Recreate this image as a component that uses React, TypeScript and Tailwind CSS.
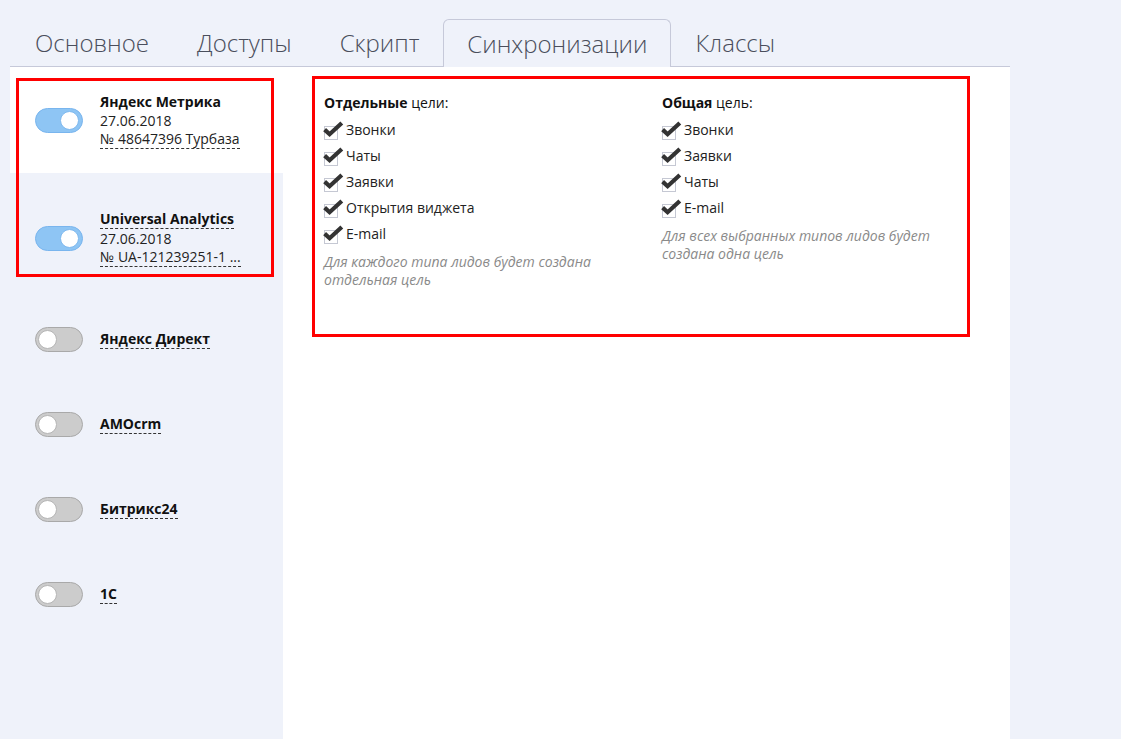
import React from "react";

function Toggle({ on }: { on: boolean }) {
  return on ? (
    <div className="relative h-[25px] w-[48px] shrink-0 rounded-full border border-[#79b5ee] bg-[#8ec5f4]">
      <div className="absolute right-[3px] top-[2px] h-[19px] w-[19px] rounded-full border border-[#7fb9ef] bg-white" />
    </div>
  ) : (
    <div className="relative h-[25px] w-[48px] shrink-0 rounded-full border border-[#a9a9a9] bg-[#cccccc]">
      <div className="absolute left-[2px] top-[2px] h-[19px] w-[19px] rounded-full border border-[#b5b5b5] bg-white" />
    </div>
  );
}

function Check({ label }: { label: string }) {
  return (
    <div className="flex h-[26px] items-center">
      <svg width="21" height="20" viewBox="0 0 21 20" className="shrink-0 -ml-px">
        <rect x="1.5" y="6.5" width="13" height="13" fill="#ffffff" stroke="#c5c8d3" />
        <path d="M1.6 9.6 L6.6 14.2 L18.8 3" fill="none" stroke="#333333" strokeWidth="4.2" strokeLinejoin="miter" />
      </svg>
      <span className="ml-[2px] text-[14px] leading-[18px] text-[#222]">{label}</span>
    </div>
  );
}

export default function App() {
  const tabs = ["Основное", "Доступы", "Скрипт", "Синхронизации", "Классы"];
  const active = 3;
  return (
    <div className="flex h-screen flex-col overflow-hidden bg-[#eff2fa] font-['Open_Sans',sans-serif]">
      <div className="ml-[10px] flex w-[1000px] flex-1 flex-col pt-[19px]">
        <div className="flex border-b border-[#c6c9d9] pl-px">
          {tabs.map((t, i) => (
            <div
              key={t}
              className={
                i === active
                  ? "-mb-px flex h-[48px] items-center rounded-t-[6px] border border-b-0 border-[#c6c9d9] bg-[#eff2fa] px-[23px] text-[24px] font-light text-[#4a4e5c]"
                  : "flex h-[47px] items-center px-6 text-[24px] font-light text-[#4a4e5c]"
              }
            >
              {t}
            </div>
          ))}
        </div>
        <div className="flex flex-1">
          <div className="relative w-[273px] shrink-0">
            <div className="flex h-[106px] items-center bg-white pl-[25px]">
              <Toggle on />
              <div className="ml-[17px] flex flex-col text-[14px] leading-[19px] text-[#222]">
                <span className="font-bold text-[#111]">Яндекс Метрика</span>
                <span>27.06.2018</span>
                <span className="self-start border-b border-dashed border-[#333] leading-[18px]">№ 48647396 Турбаза</span>
              </div>
            </div>
            <div className="flex h-[124px] items-center pl-[25px] pt-[6px]">
              <Toggle on />
              <div className="ml-[17px] flex flex-col text-[14px] leading-[19px] text-[#222]">
                <span className="self-start border-b border-dashed border-[#333] font-bold leading-[18px] text-[#111]">Universal Analytics</span>
                <span>27.06.2018</span>
                <span className="self-start border-b border-dashed border-[#333] leading-[18px]">№ UA-121239251-1 ...</span>
              </div>
            </div>
            {["Яндекс Директ", "AMOcrm", "Битрикс24", "1С"].map((n) => (
              <div key={n} className="flex h-[85px] items-center pl-[25px]">
                <Toggle on={false} />
                <span className="ml-[17px] border-b border-dashed border-[#333] text-[14px] font-bold leading-[18px] text-[#111]">{n}</span>
              </div>
            ))}
            <div className="absolute left-[6px] top-[11px] h-[199px] w-[258px] border-[3px] border-[#ff0000]" />
          </div>
          <div className="flex-1 bg-white">
            <div className="ml-[29px] mt-[9px] flex h-[261px] w-[658px] border-[3px] border-[#ff0000] pl-[9px] pt-[15px]">
              <div className="w-[338px] shrink-0 pr-[30px]">
                <div className="mb-[5px] text-[14px] leading-[18px] text-[#111]">
                  <span className="font-bold">Отдельные</span> цели:
                </div>
                {["Звонки", "Чаты", "Заявки", "Открытия виджета", "E-mail"].map((l) => (
                  <Check key={l} label={l} />
                ))}
                <div className="mt-[6px] text-[14px] italic leading-[18px] text-[#8a8a8a]">
                  Для каждого типа лидов будет создана отдельная цель
                </div>
              </div>
              <div className="min-w-0 flex-1 pr-[20px]">
                <div className="mb-[5px] text-[14px] leading-[18px] text-[#111]">
                  <span className="font-bold">Общая</span> цель:
                </div>
                {["Звонки", "Заявки", "Чаты", "E-mail"].map((l) => (
                  <Check key={l} label={l} />
                ))}
                <div className="mt-[6px] text-[14px] italic leading-[18px] text-[#8a8a8a]">
                  Для всех выбранных типов лидов будет создана одна цель
                </div>
              </div>
            </div>
          </div>
        </div>
      </div>
    </div>
  );
}
